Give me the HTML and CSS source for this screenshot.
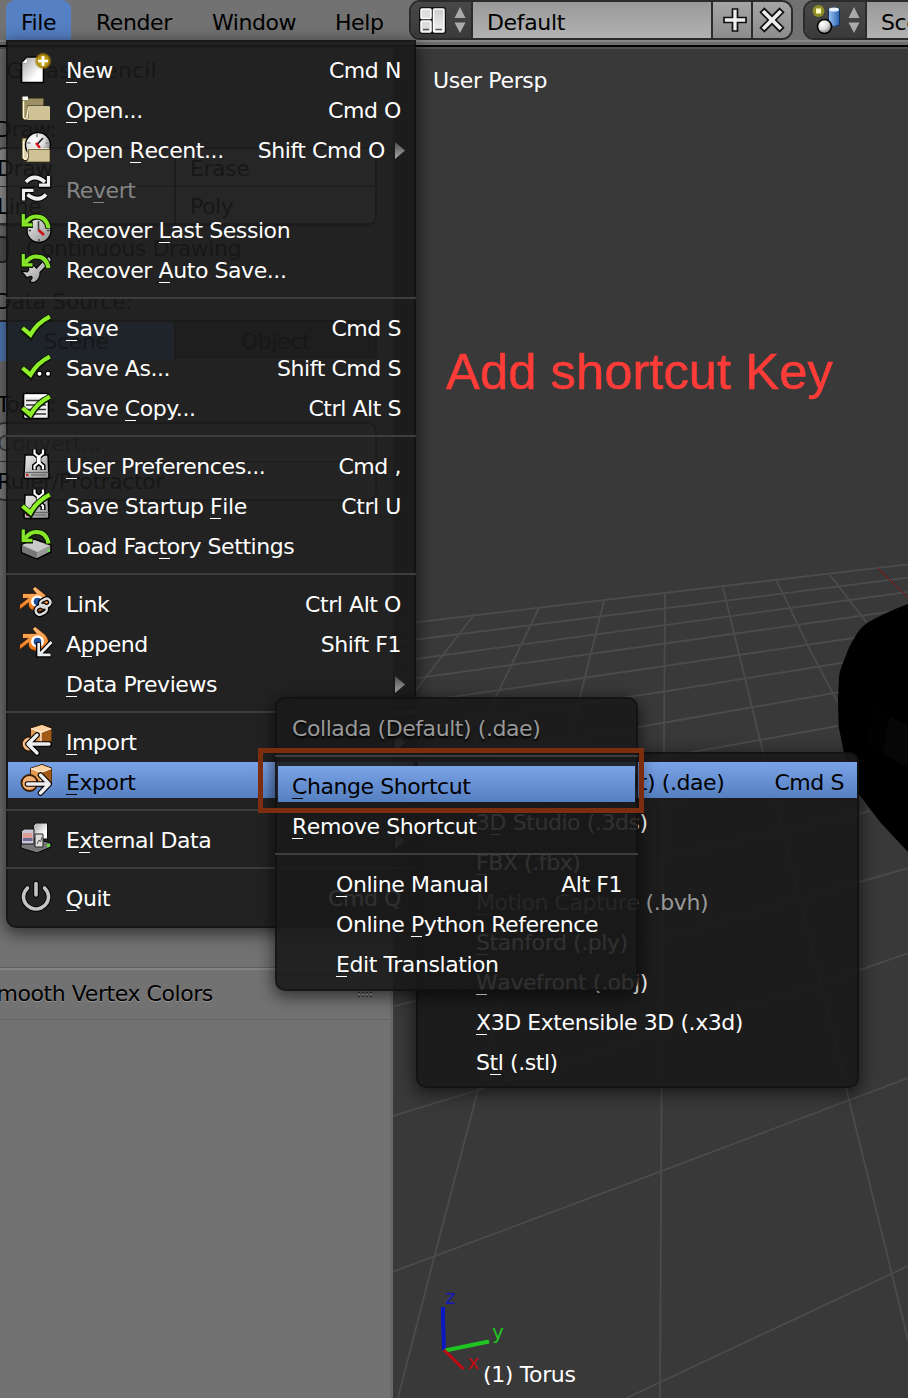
FILE: index.html
```html
<!DOCTYPE html>
<html lang="en">
<head>
<meta charset="utf-8">
<title>Blender</title>
<link rel="stylesheet" href="styles.css">
</head>
<body>
<svg class="defs" width="0" height="0" aria-hidden="true">
  <defs>
    <linearGradient id="silver" x1="0" y1="0" x2="1" y2="1"><stop offset="0" stop-color="#eee"/><stop offset="1" stop-color="#8c8c8c"/></linearGradient>
    <linearGradient id="paper" x1="0" y1="0" x2="1" y2="1"><stop offset=".2" stop-color="#bbb"/><stop offset=".7" stop-color="#fff"/></linearGradient>
    <linearGradient id="grey" x1="0" y1="0" x2="0" y2="1"><stop offset="0" stop-color="#ccc"/><stop offset="1" stop-color="#f4f4f4"/></linearGradient>
    <linearGradient id="orange" x1="0" y1="0" x2="0" y2="1"><stop offset="0" stop-color="#ffc07a"/><stop offset="1" stop-color="#f0700c"/></linearGradient>
    <linearGradient id="blue" x1="0" y1="0" x2="1" y2="0"><stop offset="0" stop-color="#9cc4f5"/><stop offset="1" stop-color="#2b62ae"/></linearGradient>
    <radialGradient id="ball" cx=".35" cy=".3" r=".8"><stop offset="0" stop-color="#fff"/><stop offset=".5" stop-color="#ddd"/><stop offset="1" stop-color="#666"/></radialGradient>
    <radialGradient id="glow"><stop offset=".3" stop-color="#d8b01c"/><stop offset=".7" stop-color="#a8860c"/><stop offset="1" stop-color="#a8860c" stop-opacity="0"/></radialGradient>

    <g id="tick" fill="none"><path d="M2 18.500 10.500 25.500Q17 13 30 7" stroke="#0b1500" stroke-width="6.600"/><path d="M2.500 18 10.500 24.700Q17 13 29.800 6.700" stroke="#8df029" stroke-width="4.200"/></g>
    <g id="undo" fill="none"><path d="M28.500 16.500Q26.500 4.500 16 4.500 10 4.500 5 11M3.500 1.500V13H13" stroke="#0b1a00" stroke-width="5.800"/><path d="M28.500 16Q26.500 4.500 16 4.500 10 4.500 5 11" stroke="#86e62a" stroke-width="4"/><path d="M3.300 2V12.800H12.500" stroke="#86e62a" stroke-width="3.200"/></g>
    <g id="disk"><path d="M5 7H28L29 29Q29 30.500 27 30.500H6Q4 30.500 4 29Z" fill="url(#silver)" stroke="#000" stroke-width="1.500"/><path d="M4.500 24.500H28.500" stroke="#666" stroke-width="1.300"/><path d="M6 27h2.500" stroke="#c22" stroke-width="2.200"/><path d="M11 27H26" stroke="#777" stroke-width="1.500"/></g>
    <g id="spanner" fill="none"><path d="M14.500 1V5.500L18.800 9 23 5.500V1M18.800 8V15M14.500 22V18L18.800 14.500 23 18V22" stroke="#000" stroke-width="5"/><path d="M14.500 1.500V5.500L18.800 9 23 5.500V1.500M14.500 21.500V18L18.800 14.500 23 18V21.500" stroke="#fff" stroke-width="2.200"/><path d="M18.800 7.500V16" stroke="#fff" stroke-width="3.800"/></g>
    <g id="logo"><path d="M15 1 25 9Q31 16 26 22Q19 27 11 23Q8 20 9 16L0 23V19L9 12H3V8H17L13 3Z" fill="url(#orange)" stroke="#5b2500" stroke-width="1" paint-order="stroke"/><ellipse cx="17.500" cy="15.500" rx="6.500" ry="6" fill="#fff"/><circle cx="17.500" cy="15.500" r="3.800" fill="#1f4f9a"/></g>
    <g id="cube"><path d="M11 4.500 22 1 31.200 4.500V18.500L21 22.500 11 18Z" fill="#e49a51" stroke="#2a1400" stroke-width="1.800" paint-order="stroke"/><path d="M11 4.500 22 1 31.200 4.500 21 8.500Z" fill="#ffd0a0"/><path d="M21 8.500 31.200 4.500V18.500L21 22.500Z" fill="#a05a16"/><path d="M11 4.500 21 8.500V21M21 8.500 31.200 4.500" fill="none" stroke="#fff0dc" stroke-width="1.300"/></g>

    <symbol id="i-new" viewBox="0 0 32 32"><path d="M7.500 5H23.500V30.500H1.500V11Z" fill="url(#paper)" stroke="#000" stroke-width="1.600"/><path d="M7.500 5.500V11H2Z" fill="#fff" stroke="#888" stroke-width=".5"/><circle cx="23" cy="9" r="8.800" fill="url(#glow)"/><path d="M23 4V14M18 9H28" stroke="#fff" stroke-width="2.600"/></symbol>
    <symbol id="i-open" viewBox="0 0 32 32"><path d="M2 4.500H8V6H24V14H8V26L4 28 2 26Z" fill="#9b9063" stroke="#2d250c" stroke-width="1.200"/><path d="M2.500 4.500H8V8H2.500Z" fill="#fff"/><path d="M3.500 9V25Q4 28 7 26L8.500 15H29.500" fill="none" stroke="#fff6d5" stroke-width="1.500"/><path d="M8.500 15H30V28H5.500Q8.500 27 8.500 24Z" fill="#cfc295"/></symbol>
    <symbol id="i-recent" viewBox="0 0 32 32"><path d="M2 6H8V28H4L2 26Z" fill="#d5caa0" stroke="#2d250c"/><circle cx="18" cy="13" r="12.500" fill="url(#ball)" stroke="#000" stroke-width="1.400"/><path d="M17 2v3M7.500 11h3M25.500 11h3" stroke="#888" stroke-width="1.500"/><path d="M17 12.500 23 6" stroke="#222" stroke-width="1.800"/><path d="M16 11 20 16" stroke="#d11" stroke-width="2.400"/><path d="M3.500 9V26Q6 29 7.500 25L8.500 17H29.500" fill="none" stroke="#fff6d5" stroke-width="1.500"/><path d="M8.500 17.500H30V30H5.500Q8.500 28 8.500 25Z" fill="#cfc295" stroke="#2d250c" stroke-width=".6"/></symbol>
    <symbol id="i-revert" viewBox="0 0 32 32"><g fill="none"><path d="M6 10Q14 1 25 10M28.500 4V13.500H18.500M26 22.500Q18 31 7.500 22.500M3.500 29V18H14" stroke="#000" stroke-width="5.800"/><path d="M6 10Q14 1 25 10M26 22.500Q18 31 7.500 22.500" stroke="#eee" stroke-width="3.800"/><path d="M28.500 4V13.200H19M3.500 28.500V18.300H13.500" stroke="#eee" stroke-width="3.200"/></g></symbol>
    <symbol id="i-last" viewBox="0 0 32 32"><circle cx="19" cy="18.500" r="12" fill="url(#silver)" stroke="#000" stroke-width="1.300"/><path d="M19 27v2.500M8.500 18.500h2.500M27 18.500h2.500M18.500 9V18" stroke="#444" stroke-width="1.600"/><path d="M18.500 18 24 23" stroke="#c11" stroke-width="2.600"/><use href="#undo"/></symbol>
    <symbol id="i-auto" viewBox="0 0 32 32"><path d="M3 20 7.500 20.500 9.500 18 8.500 14.500Q14 13 16.500 17L24 9 29 5 31 8 27.500 12 19.500 20Q20 27 14 30L10.500 29.500 13 25.500 11 23.500 7 25Z" fill="url(#silver)" stroke="#000" stroke-width="2" paint-order="stroke"/><use href="#undo"/></symbol>
    <symbol id="i-save" viewBox="0 0 32 32"><use href="#tick"/></symbol>
    <symbol id="i-saveas" viewBox="0 0 32 32"><use href="#tick"/><g fill="#fff" stroke="#000" stroke-width="1.200"><circle cx="19.500" cy="23.700" r="2.600"/><circle cx="28" cy="23.700" r="2.600"/></g></symbol>
    <symbol id="i-copy" viewBox="0 0 32 32"><rect x="3.500" y="3.500" width="25" height="25" rx="1.500" fill="#eee" stroke="#000" stroke-width="1.600"/><path d="M5 6H27" stroke="#fff" stroke-width="3"/><path d="M6 10.500H26M6 15H26M6 19.500H26M6 24H26" stroke="#333" stroke-width="1.500"/><use href="#tick"/></symbol>
    <symbol id="i-prefs" viewBox="0 0 32 32"><use href="#disk"/><use href="#spanner"/></symbol>
    <symbol id="i-startup" viewBox="0 0 32 32"><use href="#disk"/><use href="#spanner"/><use href="#tick"/></symbol>
    <symbol id="i-factory" viewBox="0 0 32 32"><path d="M1.500 17 14 11 31 17V24L17 31 1.500 24.500Z" fill="#999" stroke="#000" stroke-width="1.500"/><path d="M2 17 14 12 30 17.500 17 24Z" fill="#c9c9c9"/><path d="M2 17.500 17 24V30.500L2 24Z" fill="#777"/><path d="M27.500 22.500h2.500" stroke="#5f2" stroke-width="2"/><use href="#undo" transform="translate(0 -.5)"/></symbol>
    <symbol id="i-link" viewBox="0 0 32 32"><use href="#logo"/><g fill="none"><g stroke="#000" stroke-width="5"><rect x="20" y="13.500" width="10.500" height="7.500" rx="3.700" transform="rotate(-28 25 17)"/><rect x="15.500" y="20" width="11.500" height="8" rx="4" transform="rotate(-28 21 24)"/></g><g stroke="#ddd" stroke-width="2.500"><rect x="20" y="13.500" width="10.500" height="7.500" rx="3.700" transform="rotate(-28 25 17)"/><rect x="15.500" y="20" width="11.500" height="8" rx="4" transform="rotate(-28 21 24)"/></g></g></symbol>
    <symbol id="i-append" viewBox="0 0 32 32"><use href="#logo"/><g fill="none"><path d="M31.500 16 20 28M18.500 16.500V29H31" stroke="#000" stroke-width="5.200"/><path d="M31.500 16 20 28M18.700 17V28.800H30.500" stroke="#eee" stroke-width="2.700"/></g></symbol>
    <symbol id="i-import" viewBox="0 0 32 32"><use href="#cube"/><circle cx="9" cy="20" r="7" fill="#f6bd84" stroke="#2a1400" stroke-width="1.200"/><g fill="none" stroke-linejoin="round" stroke-linecap="round"><path d="M29.500 20H8M17 11 8 20 17 29" stroke="#000" stroke-width="5.600"/><path d="M29 20H8M17 11 8 20 17 29" stroke="#eee" stroke-width="3.400"/></g></symbol>
    <symbol id="i-export" viewBox="0 0 32 32"><use href="#cube"/><circle cx="9.500" cy="19" r="8" fill="#f6b272" stroke="#3a1b00" stroke-width="1.800"/><g fill="none" stroke-linejoin="round" stroke-linecap="round"><path d="M7.500 20H29M20.500 11 29.200 20 20.500 29" stroke="#000" stroke-width="5.600"/><path d="M7.500 20H29M20.500 11 29.200 20 20.500 29" stroke="#eee" stroke-width="3.400"/></g></symbol>
    <symbol id="i-external" viewBox="0 0 32 32"><path d="M1 22 16 17 31 21V25L17 31 1 26Z" fill="#777" stroke="#000"/><path d="M27 23.500h3" stroke="#5f2" stroke-width="2.200"/><path d="M16 1H27.500V17H13.500V3.500Z" fill="url(#paper)" stroke="#111"/><path d="M4 7H14V22H1.500V9.500Z" fill="#c9c5d5" stroke="#111"/><path d="M3 11H12.500V16H3Z" fill="#dd9c96"/><path d="M3 16H12.500V19H3Z" fill="#6b6a92"/><path d="M15 12H23V25H15Z" fill="#ddd" stroke="#222"/><path d="M17 22 19 18 20.500 20 22 15" fill="none" stroke="#555"/></symbol>
    <symbol id="i-quit" viewBox="0 0 32 32"><g fill="none" stroke-linecap="round"><path d="M7.500 8Q3.500 12 3.500 16.500A12.500 12.500 0 0 0 28.500 16.500Q28.500 12 24.500 8M16 3.500V15" stroke="#000" stroke-width="5.400"/><path d="M7.500 8Q3.500 12 3.500 16.500A12.500 12.500 0 0 0 28.500 16.500Q28.500 12 24.500 8M16 3.500V15" stroke="#c4c4c4" stroke-width="3.600"/></g></symbol>
  </defs>
</svg>

<div class="app">
  <header class="topbar">
    <nav class="menubar">
      <span class="tab tab-open">File</span><span class="tab tab-render">Render</span><span class="tab tab-window">Window</span><span class="tab">Help</span>
    </nav>
    <div class="selector screen">
      <div class="selector-icon">
        <svg width="29" height="29" viewBox="0 0 29 29"><rect x="1" y="1" width="27" height="27" rx="3" fill="#111"/><rect x="3" y="3" width="10" height="9.500" rx="1" fill="#ddd" stroke="#fff" stroke-width="1.500"/><rect x="3" y="15" width="10" height="11" rx="1" fill="#ddd" stroke="#fff" stroke-width="1.500"/><rect x="15.500" y="3" width="10.500" height="23" rx="1" fill="url(#grey)" stroke="#fff" stroke-width="1.500"/><path d="M5 23.500h6M17.500 23.500h6.500" stroke="#555" stroke-width="1.300"/></svg>
        <svg width="12" height="28" viewBox="0 0 12 28"><path d="M6 1 11.500 12H.5ZM6 27 11.500 16.500H.5Z" fill="#aaa"/></svg>
      </div>
      <div class="field">Default</div>
      <div class="tool plus"><svg width="26" height="26" viewBox="0 0 26 26"><path d="M10.500 2H15.500V10.500H24V15.500H15.500V24H10.500V15.500H2V10.500H10.500Z" fill="#eee" stroke="#111" stroke-width="1.700"/></svg></div>
      <div class="tool"><svg width="26" height="26" viewBox="0 0 26 26"><path d="M10.300 -.5H15.700V10.300H26.500V15.700H15.700V26.500H10.300V15.700H-.5V10.300H10.300Z" transform="rotate(45 13 13)" fill="#eee" stroke="#111" stroke-width="1.700"/></svg></div>
    </div>
    <div class="selector scene">
      <div class="selector-icon">
        <svg width="30" height="30" viewBox="0 0 30 30"><circle cx="6.500" cy="6" r="6" fill="#a7a51d" opacity=".75"/><rect x="4" y="3.500" width="5" height="5" fill="#ffffc0"/><path d="M16.500 4V20Q22 23 27.500 20V4Q22 1 16.500 4Z" fill="url(#blue)" stroke="#12335f"/><ellipse cx="22" cy="4.500" rx="5" ry="2" fill="#eaf4ff"/><circle cx="12.500" cy="21.500" r="7" fill="url(#ball)" stroke="#000" stroke-width="1.600"/></svg>
        <svg width="12" height="28" viewBox="0 0 12 28"><path d="M6 1 11.500 12H.5ZM6 27 11.500 16.500H.5Z" fill="#aaa"/></svg>
      </div>
      <div class="field">Scene</div>
    </div>
  </header>

  <main class="editors">
    <aside class="tools">
      <section class="grease">
        <h2 class="panel-title">Grease Pencil</h2>
        <p class="label">Draw:</p>
        <div class="buttons"><span>Draw</span><span class="mid">Erase</span><span>Line</span><span class="mid">Poly</span></div>
        <p class="check"><i class="checkbox"></i>Continuous Drawing</p>
        <p class="label source">Data Source:</p>
        <div class="toggle"><span class="on">Scene</span><span>Object</span></div>
        <p class="label tools-label">Tools:</p>
        <div class="stack"><span class="dim">Convert...</span><span>Ruler/Protractor</span></div>
      </section>
      <section class="operator"><span class="op-name">Smooth Vertex Colors</span><i class="grip"></i></section>
      <section class="rest"></section>
    </aside>
    <section class="viewport">
      <svg class="scene3d" width="515" height="1350" viewBox="393 48 515 1350">
        <g fill="none" stroke="#4b4b4b" stroke-width="1.800">
          <path d="M393 625 908 564.300M393 642.500 908 577.700M393 662 908 592M393 681.500 665 643.500 895 611M393 705.500 665 666 860 637M393 731 665 691.500 850 661.500M393 770 665 722.500 840 692M393 803 665 757 840 725.500M393 850 860 760M393 911 660 858 870 811M393 1006.500 640 945 908 868M393 1116 478 1090 823 983 908 953M393 1271.700 660 1171.700 908 1078M626.500 1398 908 1266"/>
          <path d="M472.700 616.500 416 690M539 608 488 713 393 910M604 600.700 580 697 503 997 478 1090 434.300 1256.700 398 1398M665 592.500 664 740 661.500 1100 660 1398M722.700 586.700 760 740 820 980 849 1100 891.700 1273 908 1340M776.700 580.700 810 650 838 703M830 575 867 623"/>
        </g>
        <path d="M908 604Q886 612 867 623 859 629 855 637 849 646 845 658 840 669 839 677L838 700 838.700 727 844 753 858 793 880 822 908 852Z" fill="#000"/>
        <path d="M890 716 908 725V768L882 753Z" fill="#060606"/><path d="M875 707 889 716 881 752 866 739Z" fill="#020202"/><path d="M877.500 568 908 597.500" stroke="#8c1010"/><path d="M640 809 693 798" stroke="#246824"/>
        <g fill="none"><path d="M443 1307V1317L444 1350" stroke="#0c18c4" stroke-width="4"/><path d="M445 1350.500 489 1341.500" stroke="#20c522" stroke-width="4"/><path d="M444 1350 463.500 1369" stroke="#c30a14" stroke-width="3"/></g>
        <g class="axis"><text x="445" y="1304" fill="#1219b8">z</text><text x="492" y="1339" fill="#20c522">y</text><text x="467.500" y="1369" fill="#c30a14">x</text></g>
      </svg>
      <span class="view-name">User Persp</span>
      <span class="object-name">(1) Torus</span>
      <span class="note">Add shortcut Key</span>
    </section>
  </main>

  <ul class="menu file-menu">
    <li class="item"><svg class="icon"><use href="#i-new"/></svg><span><u>N</u>ew</span><kbd>Cmd N</kbd></li>
    <li class="item"><svg class="icon"><use href="#i-open"/></svg><span><u>O</u>pen...</span><kbd>Cmd O</kbd></li>
    <li class="item"><svg class="icon"><use href="#i-recent"/></svg><span>Open <u>R</u>ecent...</span><kbd class="before-arrow">Shift Cmd O</kbd><i class="arrow"></i></li>
    <li class="item disabled"><svg class="icon"><use href="#i-revert"/></svg><span>Re<u>v</u>ert</span></li>
    <li class="item"><svg class="icon"><use href="#i-last"/></svg><span>Recover <u>L</u>ast Session</span></li>
    <li class="item"><svg class="icon"><use href="#i-auto"/></svg><span>Recover <u>A</u>uto Save...</span></li>
    <li class="sep"></li>
    <li class="item"><svg class="icon"><use href="#i-save"/></svg><span><u>S</u>ave</span><kbd>Cmd S</kbd></li>
    <li class="item"><svg class="icon"><use href="#i-saveas"/></svg><span>Save As...</span><kbd>Shift Cmd S</kbd></li>
    <li class="item"><svg class="icon"><use href="#i-copy"/></svg><span>Save <u>C</u>opy...</span><kbd>Ctrl Alt S</kbd></li>
    <li class="sep"></li>
    <li class="item"><svg class="icon"><use href="#i-prefs"/></svg><span><u>U</u>ser Preferences...</span><kbd>Cmd ,</kbd></li>
    <li class="item"><svg class="icon"><use href="#i-startup"/></svg><span>Save Startup <u>F</u>ile</span><kbd>Ctrl U</kbd></li>
    <li class="item"><svg class="icon"><use href="#i-factory"/></svg><span>Load Fac<u>t</u>ory Settings</span></li>
    <li class="sep"></li>
    <li class="item"><svg class="icon"><use href="#i-link"/></svg><span>Link</span><kbd>Ctrl Alt O</kbd></li>
    <li class="item"><svg class="icon"><use href="#i-append"/></svg><span>A<u>p</u>pend</span><kbd>Shift F1</kbd></li>
    <li class="item"><span class="icon"></span><span><u>D</u>ata Previews</span><i class="arrow"></i></li>
    <li class="sep"></li>
    <li class="item"><svg class="icon"><use href="#i-import"/></svg><span><u>I</u>mport</span><i class="arrow"></i></li>
    <li class="item active"><svg class="icon"><use href="#i-export"/></svg><span><u>E</u>xport</span></li>
    <li class="sep"></li>
    <li class="item"><svg class="icon"><use href="#i-external"/></svg><span>E<u>x</u>ternal Data</span><i class="arrow"></i></li>
    <li class="sep"></li>
    <li class="item"><svg class="icon"><use href="#i-quit"/></svg><span><u>Q</u>uit</span><kbd>Cmd Q</kbd></li>
  </ul>

  <ul class="menu export-menu">
    <li class="item active"><span>Collada (Default) (.dae)</span><kbd>Cmd S</kbd></li>
    <li class="item"><span>3<u>D</u> Studio (.3ds)</span></li>
    <li class="item"><span><u>F</u>BX (.fbx)</span></li>
    <li class="item dimmed"><span><u>M</u>otion Capture (.bvh)</span></li>
    <li class="item"><span><u>S</u>tanford (.ply)</span></li>
    <li class="item"><span><u>W</u>avefront (.obj)</span></li>
    <li class="item"><span><u>X</u>3D Extensible 3D (.x3d)</span></li>
    <li class="item"><span>S<u>t</u>l (.stl)</span></li>
  </ul>

  <ul class="menu context-menu">
    <li class="item title"><span>Collada (Default) (.dae)</span></li>
    <li class="sep"></li>
    <li class="item active"><span><u>C</u>hange Shortcut</span></li>
    <li class="item"><span><u>R</u>emove Shortcut</span></li>
    <li class="sep"></li>
    <li class="item inset"><span><u>O</u>nline Manual</span><kbd>Alt F1</kbd></li>
    <li class="item inset"><span>Online <u>P</u>ython Reference</span></li>
    <li class="item inset"><span><u>E</u>dit Translation</span></li>
  </ul>
  <div class="highlight"></div>
</div>
</body>
</html>
```
FILE: styles.css
```css
* { box-sizing: border-box; }
body {
  margin: 0;
  font: 22px/40px "DejaVu Sans", sans-serif;
  letter-spacing: -0.43px;
  color: #000;
  background: #727272;
}
.defs { position: absolute; }
.app { position: relative; width: 908px; height: 1398px; overflow: hidden; display: flex; flex-direction: column; white-space: nowrap; }
ul, p, h2 { margin: 0; padding: 0; list-style: none; }
kbd { font: inherit; }
u { position: relative; text-decoration: none; }
u::after { content: ""; position: absolute; left: 0; bottom: 0; width: 11px; height: 1px; background: currentColor; }

/* top bar */
.topbar { height: 49px; flex: none; display: flex; background: linear-gradient(#727272 40px, #858585 40px 42px, #6d6d6d 42px 45px, #000 45px 47px, #505050 47px); }
.menubar { width: 409px; flex: none; display: flex; padding-left: 6px; height: 40px; line-height: 46px; }
.tab { flex: none; height: 40px; }
.tab-open { width: 65px; margin-right: 25px; text-align: center; background: #5680c4; border-radius: 9px 9px 0 0; }
.tab-render { width: 116px; }
.tab-window { width: 123px; }
.selector { height: 40px; display: flex; flex: none; border: 2px solid #2b2b2b; border-radius: 11px; overflow: hidden; }
.screen { width: 384px; margin-right: 10px; }
.scene { width: 140px; }
.selector-icon { width: 62px; flex: none; display: flex; align-items: center; justify-content: space-between; padding: 0 5px 0 7px; background: linear-gradient(#484848, #3a3a3a); border-right: 2px solid #2b2b2b; }
.field { flex: 1; height: 36px; padding-left: 14px; line-height: 42px; letter-spacing: -0.35px; background: linear-gradient(#999, #b2b2b2); }
.tool { width: 40px; flex: none; display: flex; align-items: center; justify-content: center; border-left: 2px solid #2b2b2b; background: linear-gradient(#a5a5a5, #8c8c8c); }
.plus { padding-left: 5px; }

/* editors */
.editors { flex: 1; display: flex; }
.tools { width: 393px; flex: none; display: flex; flex-direction: column; border-right: 3px solid #686868; background: #727272; overflow: hidden; }
.grease { height: 919px; padding-top: 2px; border-bottom: 1px solid #5e5e5e; }
.panel-title { font: inherit; padding-left: 6px; letter-spacing: 0.15px; }
.label { margin: 19px 0 0 -5px; height: 37px; line-height: 40px; }
.buttons { width: 382px; margin-left: -5px; height: 79px; display: grid; grid-template: 38px 37px / 177px 1fr; line-height: 40px; border: 2px solid #383838; border-radius: 9px; background: #999; }
.buttons span { border-bottom: 1px solid #383838; }
.buttons .mid { border-left: 2px solid #383838; padding-left: 14px; }
.check { display: flex; align-items: center; gap: 17px; height: 46px; margin-left: -16px; }
.checkbox { width: 25px; height: 27px; flex: none; border: 2px solid #222; border-radius: 6px; background: #555; }
.source { margin-top: 10px; }
.toggle { display: grid; grid-template-columns: 176px 1fr; width: 377px; height: 38px; margin-top: 1px; line-height: 39px; text-align: center; border: 2px solid #282828; border-left: 0; background: #484848; }
.toggle .on { padding-right: 22px; background: #5680c2; border-right: 2px solid #282828; }
.tools-label { margin: 27px 0 0 -3px; }
.stack { display: flex; flex-direction: column; width: 382px; height: 79px; margin-left: -5px; line-height: 40px; border: 2px solid #383838; border-radius: 9px; background: #848484; }
.stack span { height: 38px; border-bottom: 1px solid #383838; }
.dim { color: #444; }
.operator { height: 52px; display: flex; justify-content: space-between; border-top: 2px solid #848484; border-bottom: 1px solid #666; }
.op-name { margin-left: -17px; line-height: 48px; text-shadow: 0 1px 1px #999; }
.grip { width: 15px; height: 8px; margin: 20px 17px 0 0; background: repeating-linear-gradient(#aaa 0 1px, transparent 1px 2px, #333 2px 3px, transparent 3px 4px); -webkit-mask: repeating-linear-gradient(90deg, #000 0 2px, transparent 2px 4px); }
.rest { flex: 1; }
.viewport { position: relative; flex: 1; background: #393939; overflow: hidden; }
.scene3d { position: absolute; left: 0; top: -1px; }
.axis { font: 20px "DejaVu Sans", sans-serif; }
.view-name, .object-name, .note { position: absolute; color: #fff; letter-spacing: -0.36px; }
.view-name { left: 40px; top: 12px; }
.object-name { left: 90px; top: 1306px; }
.note { left: 53px; top: 291px; font: 50.800px/64px "Liberation Sans", sans-serif; letter-spacing: 0; color: #ff3c38; -webkit-text-stroke: 0.500px #ff3c38; }

/* menus */
.menu { position: absolute; color: #fff; background: rgba(25, 25, 25, .9); box-shadow: 0 4px 16px 2px rgba(0, 0, 0, .55), inset 0 0 0 2px rgba(0, 0, 0, .3); }
.file-menu { left: 6px; top: 40px; width: 410px; height: 888px; padding-top: 10px; border-radius: 0 0 10px 10px; }
.export-menu { left: 416px; top: 752px; width: 443px; height: 336px; padding-top: 10px; border-radius: 0 10px 10px 10px; }
.context-menu { left: 275px; top: 697px; width: 363px; height: 294px; padding-top: 11px; border-radius: 10px; }
.item { height: 40px; line-height: 42px; display: flex; align-items: flex-start; margin: 0 2px; padding-right: 13px; }
.icon { width: 32px; height: 32px; margin: 2px 14px 0 12px; flex: none; }
.item kbd { margin-left: auto; }
.item .before-arrow { margin-right: 16px; }
.item .before-arrow + .arrow { margin-left: -6px; }
.arrow { width: 10px; height: 17px; margin: 12px -4px 0 auto; background: linear-gradient(#4a4a4a, #aaa); clip-path: polygon(0 0, 100% 50%, 0 100%); }
.active { color: #000; background: linear-gradient(#7ba3e7, #557fc1) top / 100% 36px no-repeat; }
.disabled { color: #858585; }
.dimmed { color: #999; }
.sep { height: 18px; padding-top: 7px; }
.sep::before { content: ""; display: block; height: 2px; background: #3d3d3d; }
.export-menu .item { padding-left: 58px; }
.context-menu .item { margin: 0 3px; padding-left: 14px; }
.context-menu .inset { padding-left: 58px; }
.context-menu .title { color: #999; text-shadow: 0 2px 2px #000; }
.highlight { position: absolute; left: 258px; top: 748px; width: 386px; height: 65px; border: 5px solid #7b2d0d; }
```
